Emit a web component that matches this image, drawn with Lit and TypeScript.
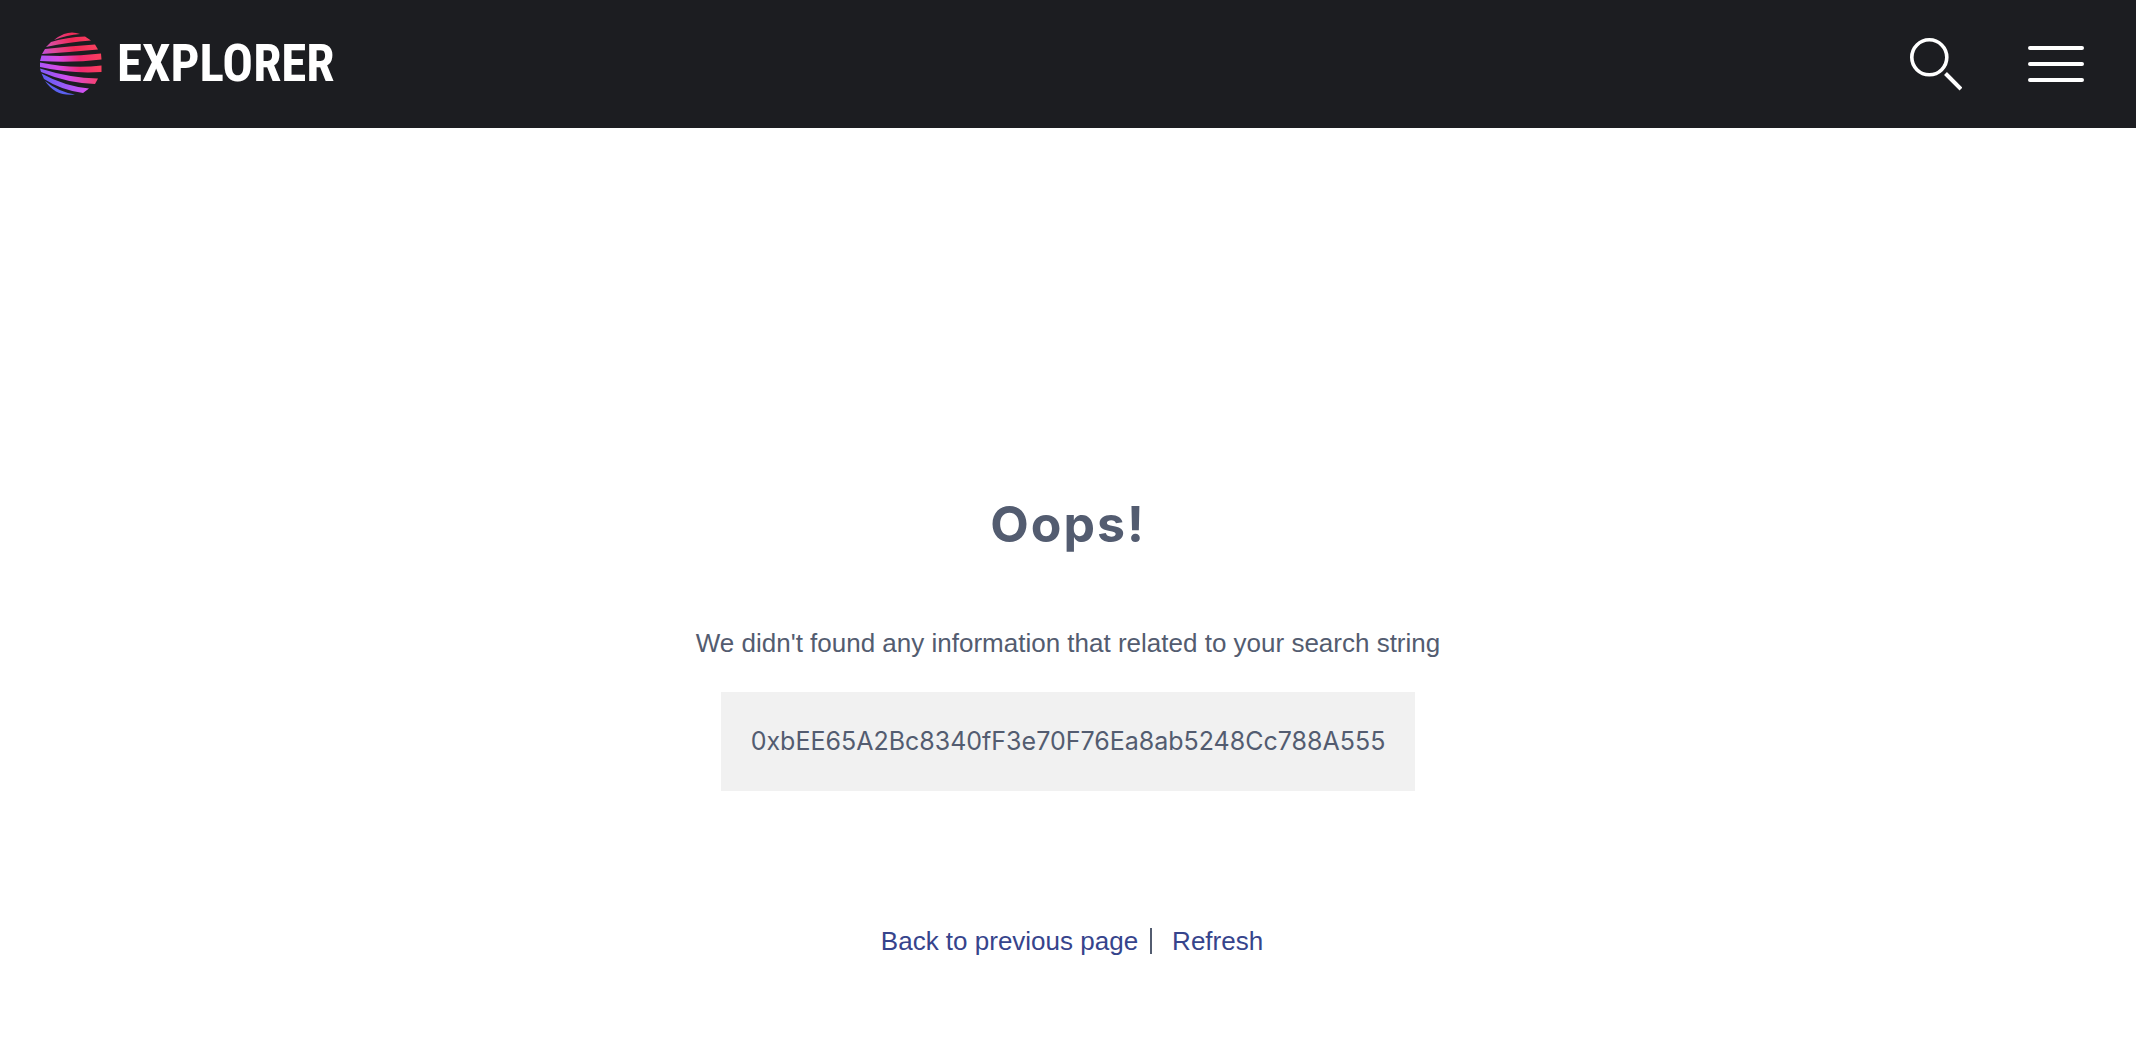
import { LitElement, html, css } from "lit";
import { customElement, property } from "lit/decorators.js";

@customElement("explorer-logo")
class ExplorerLogo extends LitElement {
  static styles = css`
    :host { display: block; }
    .brand { display: flex; align-items: center; gap: 14px; color: #fff; text-decoration: none; }
    .mark { display: block; width: 64px; height: 64px; }
    .word { font: 700 51px/64px "Roboto Condensed", "Liberation Sans Narrow", "Liberation Sans", sans-serif; }
  `;
  render() {
    return html`<a class="brand" href="#">
      <svg class="mark" viewBox="0 0 64 64" aria-hidden="true">
        <defs>
          <linearGradient id="warm" gradientUnits="userSpaceOnUse" x1="4" y1="24" x2="60" y2="8"><stop offset="0" stop-color="#c44cdc"/><stop offset=".2" stop-color="#dc4a9c"/><stop offset=".55" stop-color="#f02a58"/><stop offset="1" stop-color="#fb4560"/></linearGradient>
          <linearGradient id="mid" gradientUnits="userSpaceOnUse" x1="1" y1="34" x2="63" y2="30"><stop offset="0" stop-color="#a855f7"/><stop offset=".3" stop-color="#d94be6"/><stop offset=".65" stop-color="#f02a70"/><stop offset="1" stop-color="#fa3f5c"/></linearGradient>
          <linearGradient id="low" gradientUnits="userSpaceOnUse" x1="1" y1="40" x2="60" y2="48"><stop offset="0" stop-color="#7a5cf5"/><stop offset=".45" stop-color="#d04df0"/><stop offset="1" stop-color="#f8406c"/></linearGradient>
          <linearGradient id="cool" gradientUnits="userSpaceOnUse" x1="3" y1="44" x2="50" y2="58"><stop offset="0" stop-color="#5b5cf0"/><stop offset=".4" stop-color="#8d5cf8"/><stop offset="1" stop-color="#dc4fee"/></linearGradient>
        </defs>
        <path fill="url(#warm)" d="M15 8Q20 4 25 2Q33-1 41 2Q28 3 15 8Z M7 15L12 10Q28 5 46 4.500L52 8.500Q29 10 7 15Z M3 22L6 17Q30 14 56 12.500L59 17.500Q32 20 3 22Z"/>
        <path fill="url(#mid)" d="M1 29L2.500 23.500Q34 25 62 21.500L62.500 27.500Q34 31 1 29Z M1 35V30.500Q32 37 62.500 33.500L62.500 40Q32 42 1 35Z"/>
        <path fill="url(#low)" d="M2 40L1 36.500Q31 46 59 46.500L56 52Q28 51 2 40Z"/>
        <path fill="url(#cool)" d="M5 47L2.500 41.500Q25 54 50 56.500L44 61Q22 58 5 47Z"/>
        <path fill="#5b61f0" d="M6 49Q20 60 36 62.500Q17 65 6 49Z"/>
      </svg>
      <span class="word">EXPLORER</span>
    </a>`;
  }
}

@customElement("app-header")
class AppHeader extends LitElement {
  static styles = css`
    :host { display: block; }
    .bar { display: flex; align-items: center; justify-content: space-between; height: 128px; box-sizing: border-box; padding: 0 52px 0 39px; background: #1c1d21; }
    .actions { display: flex; align-items: center; gap: 66px; }
    .action { display: block; padding: 0; border: 0; background: none; color: #fff; cursor: pointer; }
    .icon { display: block; height: 56px; }
  `;
  render() {
    return html`<header class="bar">
      <explorer-logo></explorer-logo>
      <div class="actions">
        <button class="action" aria-label="Search">
          <svg class="icon" width="52" height="56" viewBox="0 0 52 56" fill="none" stroke="currentColor" stroke-width="3.600"><circle cx="19.300" cy="21.300" r="17.500"/><path stroke-width="4" d="M35.500 37.500L51 53"/></svg>
        </button>
        <button class="action" aria-label="Menu">
          <svg class="icon" width="56" height="56" viewBox="0 0 56 56" stroke="currentColor" stroke-width="4" stroke-linecap="round"><path d="M2 12H54M2 28H54M2 44H54"/></svg>
        </button>
      </div>
    </header>`;
  }
}

@customElement("app-root")
class AppRoot extends LitElement {
  @property() query = "0xbEE65A2Bc8340fF3e70F76Ea8ab5248Cc788A555";
  static styles = css`
    :host { display: block; min-height: 100vh; background: #fff; color: #535c70; font: 26px/40px "Liberation Sans", Arial, sans-serif; }
    .content { display: flex; flex-direction: column; align-items: center; padding: 364px 24px 80px; text-align: center; }
    .title { margin: 0; font: 700 50px/64px Inter, sans-serif; letter-spacing: 2px; }
    .message { margin: 67px 0 29px; }
    .query { padding: 30px; background: #f1f1f1; font: 25px/39px Inter, sans-serif; overflow-wrap: anywhere; }
    .links { display: flex; align-items: center; margin-top: 130px; padding-left: 8px; }
    .link { color: #36448c; text-decoration: none; }
    .divider { width: 2px; height: 26px; margin: 0 20px 0 12px; background: #535c70; }
  `;
  render() {
    return html`<app-header></app-header>
      <main class="content">
        <h1 class="title">Oops!</h1>
        <p class="message">We didn't found any information that related to your search string</p>
        <div class="query">${this.query}</div>
        <nav class="links">
          <a class="link" href="#back">Back to previous page</a>
          <span class="divider"></span>
          <a class="link" href="#refresh">Refresh</a>
        </nav>
      </main>`;
  }
}
